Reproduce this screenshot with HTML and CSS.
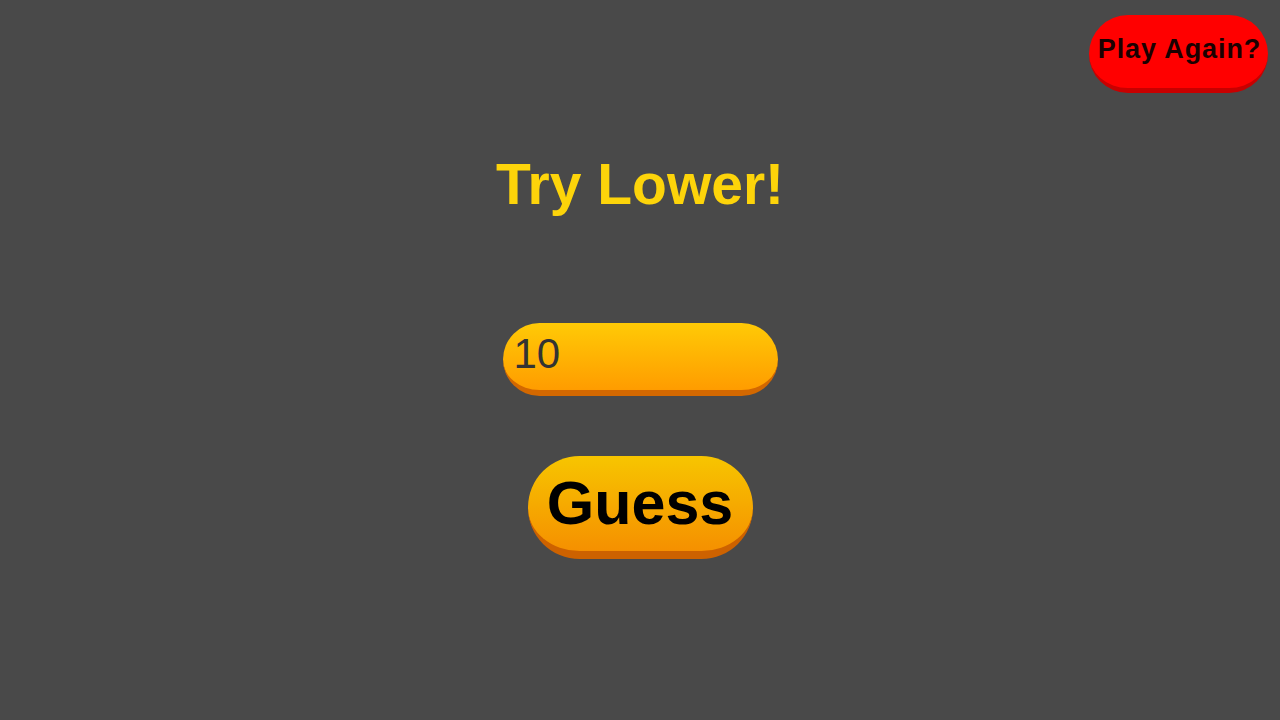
FILE: index.html
```html
<!DOCTYPE html>
<html lang="en">
<head>
  <meta charset="UTF-8">
  <meta name="viewport" content="width=device-width, initial-scale=1.0">
  <title>Guess the Number</title>
  <link rel="stylesheet" href="styles.css">
</head>
<body>

  <div class="screen">
    <!-- top right restart -->
    <div class="topbar">
      <button class="play-again">Play Again?</button>
    </div>

    <div class="game">
      <h1 class="message">Try Lower!</h1>

      <input type="text" class="guess-input" value="10" />

      <button class="guess-button">Guess</button>
    </div>
  </div>

</body>
</html>
```

FILE: styles.css
```css
html, body {
  margin: 0;
  padding: 0;
  height: 100%;
  overflow: hidden;
}

body {
  background-color: #494949;
  font-family: "Liberation Sans", Arial, sans-serif;
}

.screen {
  width: 100%;
  height: 720px;
}

.topbar {
  display: flex;
  justify-content: flex-end;
  padding: 15px 12px 0 0;
}

.play-again {
  width: 179px;
  height: 78px;
  padding: 0 0 5px 2px;
  border: none;
  border-bottom: 5px solid #c80000;
  border-radius: 40px;
  background-color: #ff0000;
  color: #1a0000;
  font-family: "Liberation Sans", Arial, sans-serif;
  font-weight: bold;
  font-size: 27px;
  letter-spacing: 0.9px;
  white-space: nowrap;
  cursor: pointer;
}

.game {
  display: flex;
  flex-direction: column;
  align-items: center;
}

.message {
  margin: 59px 0 0 0;
  font-size: 57px;
  line-height: 64px;
  font-weight: bold;
  color: #fdd40a;
}

.guess-input {
  box-sizing: border-box;
  width: 275px;
  height: 73px;
  margin-top: 107px;
  padding: 0 0 6px 11px;
  border: none;
  border-bottom: 6px solid #d36800;
  border-radius: 37px;
  background: linear-gradient(#ffca06, #ff9c00);
  color: #333;
  font-family: "Liberation Sans", Arial, sans-serif;
  font-size: 42px;
  outline: none;
}

.guess-button {
  box-sizing: border-box;
  width: 225px;
  height: 103px;
  margin-top: 60px;
  padding: 0 0 2px 0;
  border: none;
  border-bottom: 8px solid #cd6200;
  border-radius: 52px;
  background: linear-gradient(#f7c500, #f59000);
  color: #000;
  font-family: "Liberation Sans", Arial, sans-serif;
  font-weight: bold;
  font-size: 61px;
  cursor: pointer;
}
```
